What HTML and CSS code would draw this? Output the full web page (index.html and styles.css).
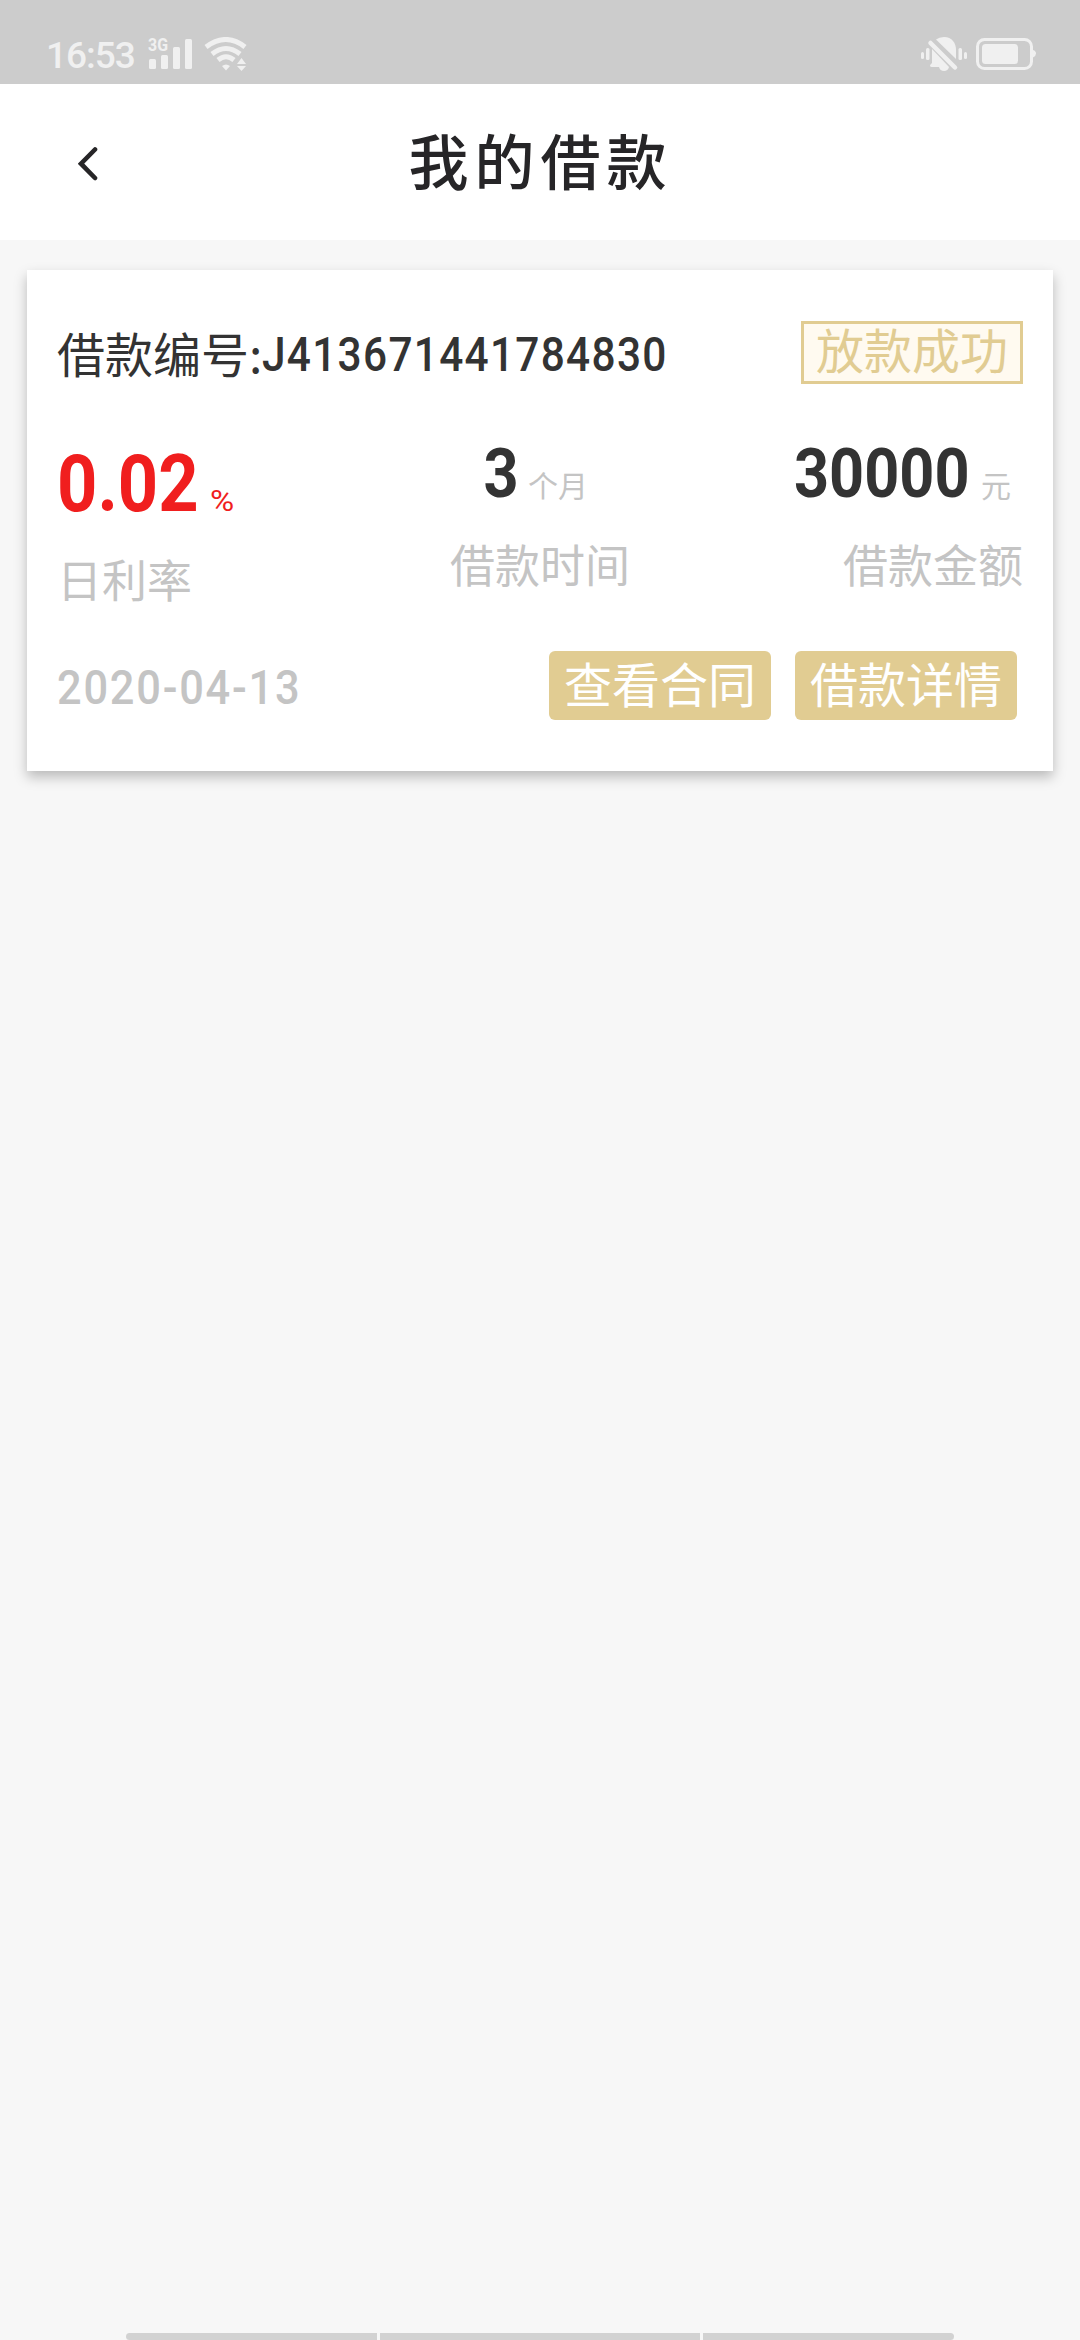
FILE: index.html
```
<!DOCTYPE html>
<html lang="zh-CN">

<head>
    <meta charset="UTF-8">
    <meta name="viewport" content="width=device-width, initial-scale=1.0">
    <title>我的借款</title>
    <link rel="stylesheet" href="styles.css">
</head>

<body>

    <div class="status-bar">
        <div class="status-left">
            <span class="clock">16:53</span>
            <svg class="signal" width="44" height="32" viewBox="0 0 44 32" fill="#f0f0f0">
                <text x="0" y="13" class="network" textLength="20" lengthAdjust="spacingAndGlyphs">3G</text>
                <rect x="1" y="21" width="7" height="10" rx="1.5"/>
                <rect x="13" y="17" width="7" height="14" rx="1.5"/>
                <rect x="25" y="9" width="7" height="22" rx="1.5"/>
                <rect x="37" y="1" width="7" height="30" rx="1.5"/>
            </svg>
            <svg class="wifi" width="44" height="34" viewBox="0 0 44 34">
                <g fill="none" stroke="#f0f0f0" stroke-width="5">
                    <path d="M2 10Q22 -5 41 10"/>
                    <path d="M8 17Q22 6 36 17"/>
                    <path d="M14 23Q22 16.500 30 23"/>
                </g>
                <path fill="#f0f0f0" d="M18 29Q22 26 26 29L22 33.500ZM33 27L37.500 21L42 27ZM33 29H42L37.500 34Z"/>
            </svg>
        </div>
        <div class="status-right">
            <svg width="46" height="35" viewBox="0 0 46 35" fill="#f0f0f0">
                <rect x="0" y="15" width="3" height="7" rx="1.500"/>
                <rect x="5" y="11" width="3.500" height="12" rx="1.500"/>
                <rect x="37.500" y="11" width="3.500" height="12" rx="1.500"/>
                <rect x="43" y="15" width="3" height="7" rx="1.500"/>
                <path d="M11 12L28 30Q27 34 23 34Q19 34 18 30H11Q9 30 9 28.500Q9 27.500 11 26Z"/>
                <path d="M15 2.500Q18 0 23 0C31 0 35 6 35 13V22Z"/>
                <path d="M9.500 6L34 30.500" stroke="#f0f0f0" stroke-width="4.500" stroke-linecap="round"/>
                <path d="M13 3.500L37 27.500" stroke="#ccc" stroke-width="2" />
            </svg>
            <svg class="battery" width="60" height="32" viewBox="0 0 60 32">
                <rect x="1.500" y="1.500" width="54" height="29" rx="7" fill="none" stroke="#f0f0f0" stroke-width="3"/>
                <rect x="6" y="6" width="36" height="20" rx="3.500" fill="#f0f0f0"/>
                <path d="M57 12Q60 13 60 15.500Q60 18 57 19.500Z" fill="#f0f0f0"/>
            </svg>
        </div>
    </div>

    <div class="header">
        <svg class="back" width="20" height="34" viewBox="0 0 20 34">
            <path d="M17 2.500L3 16.700L17 31" fill="none" stroke="#262527" stroke-width="4.600" stroke-linecap="round"/>
        </svg>
        <h1>我的借款</h1>
    </div>

    <div class="content">
        <div class="loan-card">
            <div class="loan-head">
                <div class="loan-number">
                    <span>借款编号:</span>
                    <span class="din loan-id">J413671441784830</span>
                </div>
                <div class="loan-status">放款成功</div>
            </div>
            <div class="loan-info">
                <div class="info-item info-item--rate">
                    <div class="amount"><b class="din">0.02</b><i class="din">%</i></div>
                    <div class="label">日利率</div>
                </div>
                <div class="info-item info-item--time">
                    <div class="amount"><b class="din">3</b><i>个月</i></div>
                    <div class="label">借款时间</div>
                </div>
                <div class="info-item info-item--money">
                    <div class="amount"><b class="din">30000</b><i>元</i></div>
                    <div class="label">借款金额</div>
                </div>
            </div>
            <div class="loan-foot">
                <span class="din date">2020-04-13</span>
                <div class="buttons">
                    <button>查看合同</button>
                    <button>借款详情</button>
                </div>
            </div>
        </div>
    </div>

    <div class="nav-hint">
        <span></span>
        <span></span>
        <span></span>
    </div>

</body>

</html>
```
FILE: styles.css
```
* {
    box-sizing: border-box;
}

body {
    margin: 0;
    height: 2340px;
    display: flex;
    flex-direction: column;
    background: #f7f7f7;
    color: #333;
    font-family: "Noto Sans CJK SC", sans-serif;
    overflow: hidden;
}

/* status bar */
.status-bar {
    height: 84px;
    padding: 37px 44px 0 46px;
    display: flex;
    justify-content: space-between;
    background: #ccc;
    color: #f0f0f0;
}

.status-left,
.status-right {
    display: flex;
    align-items: flex-start;
}

.clock {
    width: 102px;
    font: 500 37px/37px Roboto, sans-serif;
    letter-spacing: -1px;
}

.signal {
    margin-top: 1px;
    overflow: visible;
}

.network {
    font: 700 18px Roboto, sans-serif;
}

.wifi {
    margin-left: 12px;
}

.battery {
    margin: 1px 0 0 9px;
}

/* title */
.header {
    height: 156px;
    display: flex;
    align-items: center;
    background: #fff;
}

.back {
    margin: 4px 0 0 78px;
}

.header h1 {
    margin: 0;
    padding: 0 97px 7px 0;
    flex: 1;
    text-align: center;
    color: #262527;
    font-size: 60px;
    font-weight: 500;
    line-height: 80px;
    letter-spacing: 6px;
}

/* loan */
.content {
    flex: 1;
    padding: 30px 27px;
}

.loan-card {
    height: 501px;
    padding: 51px 30px 0;
    background: #fff;
    box-shadow: 0 6px 12px rgba(0, 0, 0, 0.25);
}

/* narrow figures */
.din {
    display: inline-block;
    font-family: Roboto, "Noto Sans CJK SC", sans-serif;
    transform-origin: left center;
    white-space: nowrap;
}

.loan-head {
    height: 63px;
    display: flex;
    justify-content: space-between;
}

.loan-number {
    display: flex;
    font-size: 48px;
    line-height: 62px;
}

.loan-id {
    width: 410px;
    font-size: 49px;
    font-weight: 500;
    line-height: 68px;
    letter-spacing: 1.5px;
    transform: scaleX(0.865);
}

.loan-status {
    width: 222px;
    border: 3px solid #e1cc92;
    background: #fffaf0;
    color: #e1cc92;
    font-size: 48px;
    line-height: 49px;
    text-align: center;
}

.loan-info {
    height: 246px;
    padding-top: 51px;
    display: flex;
    justify-content: space-between;
}

.info-item {
    width: 300px;
}

.amount {
    height: 78px;
    display: flex;
    align-items: baseline;
    line-height: 78px;
}

.amount b {
    font-size: 68px;
    font-weight: 700;
    transform: scaleX(0.9);
}

.amount i {
    color: #c4c4c4;
    font-size: 30px;
    font-style: normal;
}

.label {
    margin-top: 21px;
    color: #c4c4c4;
    font-size: 45px;
    line-height: 60px;
}

.info-item--rate .amount {
    height: 93px;
    padding-top: 3px;
    line-height: 93px;
    color: #f01e1e;
}

.info-item--rate .amount b {
    width: 153px;
    font-size: 80px;
    transform: scaleX(0.88);
}

.info-item--rate .amount i {
    color: #f01e1e;
    transform: scaleX(1.1);
}

.info-item--time {
    text-align: center;
}

.info-item--time .amount {
    padding-left: 89px;
}

.info-item--time b {
    width: 49px;
}

.info-item--money {
    text-align: right;
}

.info-item--money .amount {
    justify-content: flex-end;
    padding-right: 12px;
}

.info-item--money b {
    width: 187px;
    text-align: left;
}

.loan-foot {
    height: 69px;
    margin-top: 21px;
    display: flex;
    justify-content: space-between;
}

.date {
    color: #c4c4c4;
    font-size: 49px;
    font-weight: 500;
    line-height: 74px;
    letter-spacing: 2px;
    transform: scaleX(0.885);
}

.buttons {
    display: flex;
    gap: 24px;
    padding-right: 6px;
}

.buttons button {
    width: 222px;
    height: 69px;
    padding: 0 0 7px;
    border: none;
    border-radius: 6px;
    background: #e1cc92;
    color: #fff;
    font-family: inherit;
    font-size: 48px;
    line-height: 62px;
}

/* gesture bar */
.nav-hint {
    height: 7px;
    margin: 0 126px;
    display: flex;
    gap: 3px;
    overflow: hidden;
}

.nav-hint span {
    width: 251px;
    background: #d2d2d2;
}

.nav-hint span:nth-child(2) {
    flex: 1;
}

.nav-hint span:first-child {
    border-radius: 4px 0 0 4px;
}

.nav-hint span:last-child {
    border-radius: 0 4px 4px 0;
}
```
